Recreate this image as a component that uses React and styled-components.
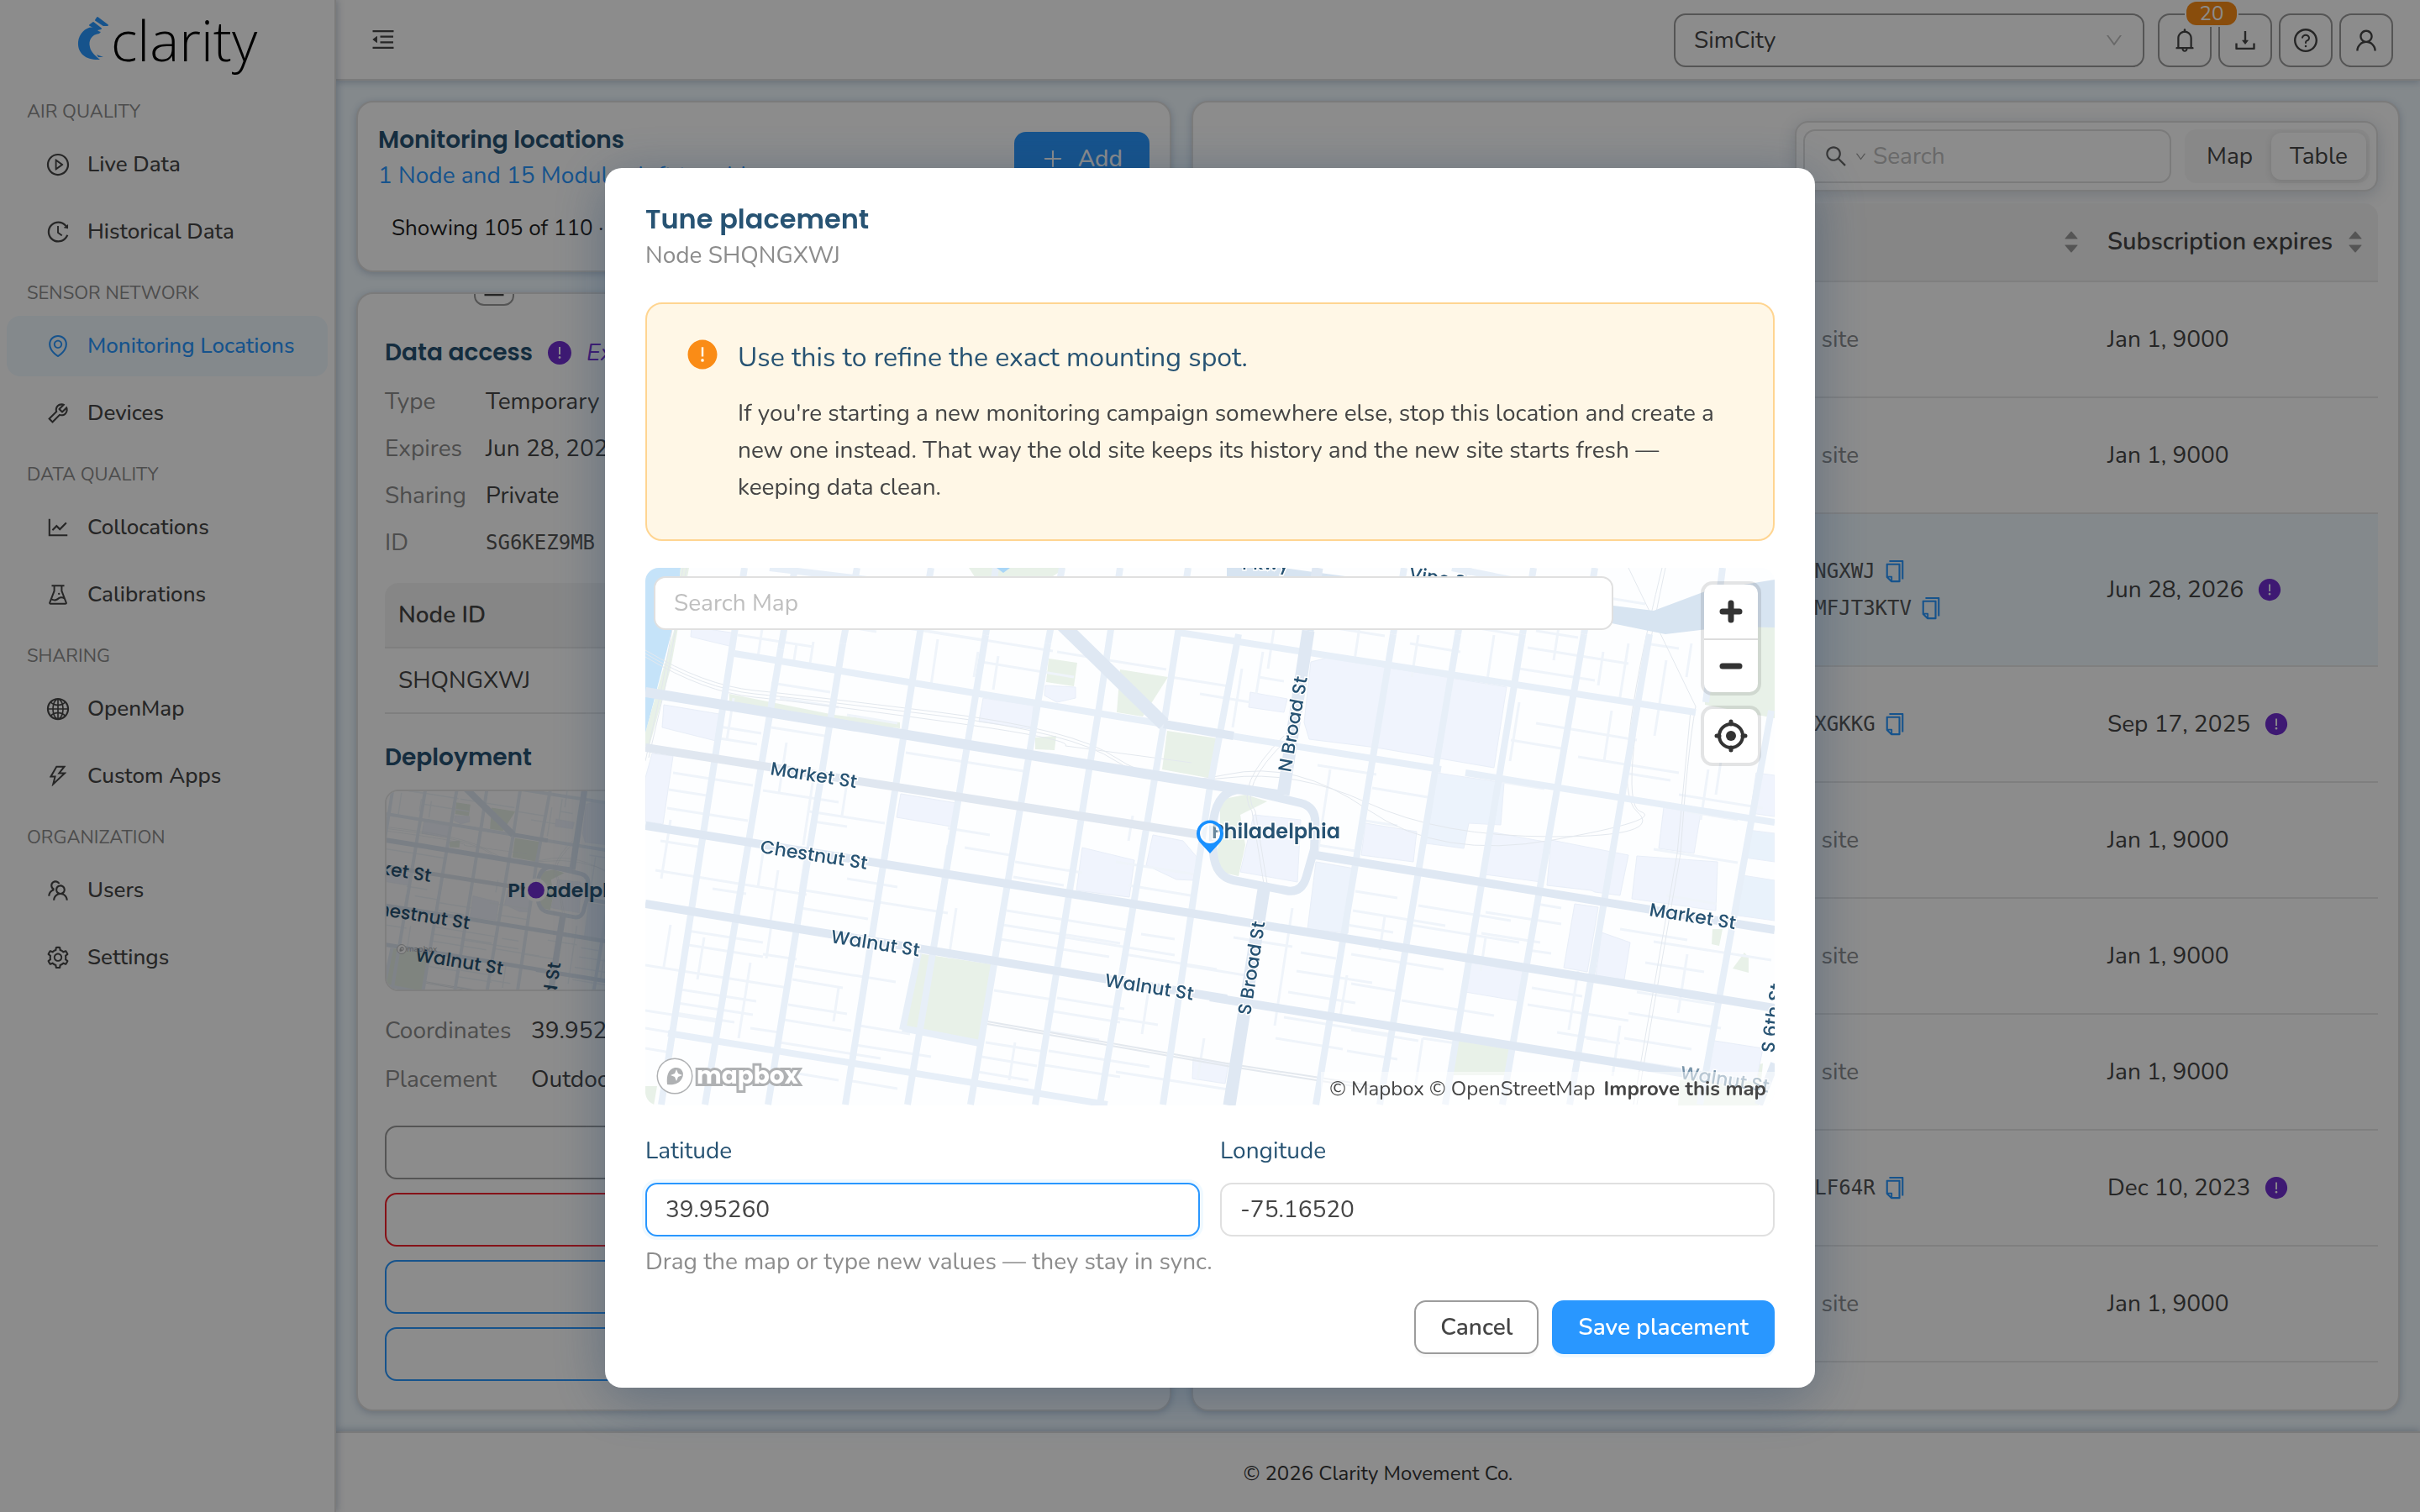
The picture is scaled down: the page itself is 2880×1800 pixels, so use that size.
import React from 'react';
import styled, { createGlobalStyle } from 'styled-components';
import {
    AiFillCaretDown,
    AiFillCaretUp,
    AiFillExclamationCircle,
    AiOutlineBell,
    AiOutlineCopy,
    AiOutlineDown,
    AiOutlineDownload,
    AiOutlineEnvironment,
    AiOutlineExperiment,
    AiOutlineGlobal,
    AiOutlineHistory,
    AiOutlineLineChart,
    AiOutlineMenuFold,
    AiOutlineMinus,
    AiOutlinePlayCircle,
    AiOutlinePlus,
    AiOutlineQuestionCircle,
    AiOutlineSearch,
    AiOutlineSetting,
    AiOutlineTeam,
    AiOutlineThunderbolt,
    AiOutlineTool,
    AiOutlineUser
} from 'react-icons/ai';

const menu = [
    { title: 'AIR QUALITY', items: [['Live Data', AiOutlinePlayCircle], ['Historical Data', AiOutlineHistory]] },
    { title: 'SENSOR NETWORK', items: [['Monitoring Locations', AiOutlineEnvironment], ['Devices', AiOutlineTool]] },
    { title: 'DATA QUALITY', items: [['Collocations', AiOutlineLineChart], ['Calibrations', AiOutlineExperiment]] },
    { title: 'SHARING', items: [['OpenMap', AiOutlineGlobal], ['Custom Apps', AiOutlineThunderbolt]] },
    { title: 'ORGANIZATION', items: [['Users', AiOutlineTeam], ['Settings', AiOutlineSetting]] }
];

const rows = [
    { expires: 'Jan 1, 9000' },
    { expires: 'Jan 1, 9000' },
    { devices: ['SHQNGXWJ', 'AKJMFJT3KTV'], expires: 'Jun 28, 2026', warn: true, active: true },
    { devices: ['SVYXGKKG'], expires: 'Sep 17, 2025', warn: true },
    { expires: 'Jan 1, 9000' },
    { expires: 'Jan 1, 9000' },
    { expires: 'Jan 1, 9000' },
    { devices: ['SN8LF64R'], expires: 'Dec 10, 2023', warn: true },
    { expires: 'Jan 1, 9000' }
];

// Short alleys that run parallel to the main streets: x, y, length
const alleys = [
    [110, 80, 90], [165, 58, 110], [250, 62, 150], [335, 75, 150], [150, 137, 70], [160, 155, 70], [240, 175, 60],
    [88, 189, 50], [88, 203, 45], [150, 190, 70], [310, 220, 140], [400, 112, 110], [490, 100, 130], [625, 130, 70],
    [33, 244, 95], [28, 264, 45], [26, 286, 96], [140, 265, 90], [195, 290, 90], [200, 302, 40], [360, 310, 50],
    [380, 333, 60], [440, 350, 80], [438, 368, 60], [18, 325, 45], [12, 360, 180], [80, 382, 40], [190, 384, 170],
    [185, 405, 80], [240, 370, 60], [430, 408, 150], [425, 425, 140], [422, 442, 130], [560, 350, 95], [575, 378, 80],
    [50, 432, 90], [45, 448, 95], [0, 473, 170], [140, 460, 40], [178, 474, 120], [175, 490, 60], [42, 502, 90],
    [38, 518, 90], [0, 527, 90], [170, 520, 70], [165, 538, 80], [36, 530, 70], [255, 545, 60], [160, 565, 120],
    [0, 548, 30], [125, 548, 34], [0, 572, 30], [250, 568, 90], [245, 588, 80], [170, 600, 60], [240, 610, 60],
    [405, 565, 70], [400, 582, 66], [396, 600, 60], [480, 552, 60], [560, 536, 50], [480, 575, 120], [475, 592, 90],
    [560, 600, 140], [415, 503, 70], [490, 512, 80], [485, 528, 80], [500, 440, 130], [590, 436, 40], [570, 460, 110],
    [640, 473, 80], [700, 440, 70], [660, 150, 60], [730, 130, 30], [780, 215, 60], [800, 235, 70], [865, 262, 66],
    [850, 300, 45], [800, 330, 45], [845, 385, 50], [842, 408, 110], [835, 425, 55], [920, 402, 110], [910, 425, 130],
    [1000, 410, 90], [995, 435, 70], [1060, 400, 30], [1050, 455, 28], [780, 458, 42], [775, 480, 90], [840, 460, 110],
    [840, 495, 60], [900, 515, 110], [765, 505, 80], [760, 535, 130], [750, 560, 80], [840, 550, 80], [835, 575, 60],
    [925, 560, 40], [1000, 565, 120], [1055, 500, 60], [1050, 520, 120], [1085, 553, 60], [1120, 560, 40],
    [1150, 400, 70], [1160, 430, 80], [1200, 445, 140], [1190, 470, 70], [1180, 505, 100], [1170, 530, 110],
    [1165, 560, 80], [1160, 585, 120], [1215, 390, 60], [1060, 185, 60], [1030, 205, 60], [1020, 255, 50],
    [1120, 195, 60], [1110, 225, 120], [1170, 245, 50], [1230, 270, 100], [1240, 290, 60], [1200, 335, 100],
    [1050, 95, 120], [1040, 120, 90], [1060, 75, 50], [1110, 30, 80], [1190, 90, 40], [900, 60, 60], [910, 90, 60],
    [980, 70, 60], [850, 50, 40], [810, 70, 70], [1000, 20, 90], [560, 60, 60]
];

// Side passages that run parallel to the numbered avenues: x, y, length
const passages = [
    [140, 66, 40], [180, 90, 26], [200, 88, 26], [348, 85, 55], [420, 105, 40], [396, 100, 30], [105, 155, 50],
    [168, 208, 60], [200, 250, 80], [240, 255, 40], [30, 300, 70], [158, 360, 60], [140, 340, 40], [190, 345, 40],
    [360, 330, 40], [370, 405, 60], [70, 440, 50], [30, 425, 50], [150, 425, 40], [125, 470, 90], [230, 500, 40],
    [440, 565, 45], [600, 495, 60], [665, 560, 50], [580, 295, 30], [815, 240, 100], [770, 405, 140], [880, 415, 40],
    [835, 485, 50], [1040, 160, 70], [1090, 50, 60], [1150, 170, 60], [1140, 100, 40], [1170, 90, 70], [1010, 80, 60],
    [920, 80, 50], [850, 70, 40], [750, 60, 60], [710, 120, 70], [735, 100, 50], [1215, 110, 90], [1245, 90, 40],
    [1265, 240, 60], [1280, 230, 40], [1240, 460, 70], [1160, 545, 60], [1000, 440, 40], [925, 560, 60], [1110, 480, 70]
];

const Streets = () => (
    <>
        <rect x="-20" y="-20" width="1400" height="700" fill="#fdfeff" />
        <path d="M0 0H42L38 50L0 198Z" fill="#c5e3f9" />
        <path d="M42 0H52L30 120L4 215L0 212V196L34 75Z" fill="#e8f1e8" />
        <g fill="#e8f1e8">
            <path d="M385 0H500L470 20H398Z" />
            <path d="M480 108L514 113L510 141L477 136Z" />
            <path d="M565 121L622 130L592 177L561 172Z" />
            <path d="M621 194L681 203L675 251L615 240Z" />
            <path d="M100 150L225 175L303 184V191L215 183L100 160Z" />
            <path d="M464 202L489 200L487 217L464 216Z" />
            <path d="M325 459L412 472L398 563L307 550Z" />
            <path d="M684 276L714 270L740 278L708 294L714 330L706 367L676 360L684 320Z" />
            <path d="M964 559L1031 572L1024 604H959Z" />
            <path d="M1344 68V179L1261 163V128L1310 60Z" />
            <path d="M1231 610L1330 590L1325 640H1229Z" />
            <path d="M1308 458L1313 464V482L1294 477Z" />
            <path d="M1270 430L1282 430L1278 450L1269 448Z" />
            <path d="M0 617H14L10 640H0Z" />
        </g>
        <g fill="#f0f4fd" stroke="#e8eef8" strokeWidth="1">
            <path d="M55 70L108 78L104 94L54 82Z" />
            <path d="M22 163L88 174L84 206L20 190Z" />
            <path d="M8 221L33 224L21 305L0 302V250Z" />
            <path d="M402 155L462 164L459 192L397 183Z" />
            <path d="M304 269L370 280L364 308L299 297Z" />
            <path d="M476 140L512 142V155L490 160L475 152Z" />
            <path d="M520 333L582 348L576 392L513 384Z" />
            <path d="M604 318L640 325L657 345L652 372L632 371L596 354Z" />
            <path d="M792 112L812 107L1025 142L1010 238L870 214L790 204L784 184Z" />
            <path d="M720 148L764 156L760 172L718 166Z" />
            <path d="M942 244L1022 256L1018 306L980 304L974 334L929 328Z" fill="#ecf3fc" />
            <path d="M857 304L918 314L914 350L852 342Z" />
            <path d="M1004 314L1070 326L1066 374L999 365Z" />
            <path d="M1078 324L1170 342L1160 390L1130 386L1126 384L1073 378Z" />
            <path d="M1180 343L1276 350L1274 408L1174 394Z" />
            <path d="M798 350L844 358L836 435L788 430Z" fill="#edf3fc" />
            <path d="M1106 400L1134 404L1121 481L1093 476Z" />
            <path d="M1138 434L1172 446L1165 490L1131 486Z" />
            <path d="M982 470L1047 481L1041 516L976 505Z" />
            <path d="M1212 285L1256 292L1248 340L1206 334Z" />
            <path d="M1312 312L1344 316V350L1308 345Z" fill="#e9f2fb" />
            <path d="M1306 366L1344 372V420L1300 414Z" fill="#e9f2fb" />
            <path d="M1322 244L1344 247V296L1315 292Z" />
            <path d="M1266 562L1330 572L1322 612L1262 604Z" />
            <path d="M724 294L780 300L776 374L708 362Z" />
            <path d="M652 584L694 590L690 614L651 608Z" />
        </g>
        <g fill="none" stroke="#eff4fa" strokeWidth="3">
            {alleys.map(([x, y, l]) => <path key={`a${x}-${y}`} d={`M${x} ${y}l${l} ${Math.round(l * 0.16)}`} />)}
            {passages.map(([x, y, l]) => <path key={`p${x}-${y}`} d={`M${x} ${y}l${-Math.round(l * 0.15)} ${l}`} />)}
        </g>
        <g fill="none" stroke="#e3e8ee" strokeWidth="1">
            <path d="M0 98Q70 140 130 146T350 172T560 226T692 250T860 280T1080 320T1180 290T1210 0" />
            <path d="M0 102Q70 144 130 150T350 176T560 230T692 246T860 288T1080 324T1184 290T1214 0" />
            <path d="M0 106Q70 148 130 154T350 182T500 212L650 232" />
            <path d="M45 0L20 140L0 230M49 0L24 140L4 226" />
            <path d="M1170 0L1250 165Q1240 220 1232 340L1180 639M1244 170L1228 340L1176 639" />
            <path d="M760 200Q700 260 722 290L736 376M764 204Q704 262 726 290L740 376" />
            <path d="M407 540L692 590L900 622M407 543L692 593L900 626" strokeWidth="2" />
        </g>
        <g fill="none" stroke="#e7eff8" strokeWidth="8">
            <path d="M118 0L19 639M161 97L71 639M235 90L146 639M328 70L238 639M405 80L312 639M479 90L387 639" />
            <path d="M565 0L541 160L464 639M646 0L617 186L541 639M706 79L672 260L616 639" />
            <path d="M161 97L178 0M235 90L252 0M328 70L340 0M405 80L417 0M479 90L496 0" />
            <path d="M890 79L798 639M967 79L874 639M1044 79L952 639M1117 79L1020 639M1195 79L1100 639M1340 170L1255 639" />
            <path d="M890 79L903 0M967 79L980 0M1044 79L1057 0M1117 79L1130 0M1282 0L1262 160" />
            <path d="M106 102L617 186L700 200M635 77L1250 172M672 196L947 240M976 244L1344 303M148 0L380 28" />
            <path d="M27 554L550 639M306 548L398 566M325 459L306 550M960 0L1060 20" />
        </g>
        <path d="M692 -10Q860 16 1000 28L1152 45L1200 51L1264 27L1344 14V71L1290 70L1214 79L1150 66L1000 52L692 14Z" fill="#d7e4f1" />
        <g fill="none" stroke="#dfe8f3" strokeWidth="10">
            <path d="M0 214L662 318" stroke="#e0e7f0" />
            <path d="M0 307L692 418M672 415L1344 524M0 400L692 513M672 511L1300 612M617 186L700 200" />
            <path d="M798 342L1344 431" />
            <path d="M676 320V300Q682 262 712 264L780 280Q800 285 797 310L796 335L786 370Q780 388 762 384L700 372Q672 366 676 320" />
            <path d="M1344 590L1325 639" />
        </g>
        <g fill="none" stroke="#dfe8f3">
            <path d="M0 148L692 261L759 271" strokeWidth="12" />
            <path d="M480 52L617 186" strokeWidth="16" />
            <path d="M789 75L759 270M736 383L695 640" strokeWidth="15" />
            <path d="M800 0L789 75" strokeWidth="13" />
        </g>
        <path d="M418 0H434L426 6Z" fill="#a9d6f7" />
    </>
);

const BrandMark = () => (
    <svg width="40" height="56" viewBox="0 0 40 56" aria-hidden="true">
        <path d="M26 21C17 22 13 29 15 37C16 43 22 48 27 52C12 53 0 46 1 31C2 20 12 11 21 14C24 15 23 18 28 19Z" fill="#2997ff" />
        <path d="M19 8L28 15L24 16L15 11ZM24 2L36 11L31 11L22 5Z" fill="#2997ff" stroke="#2997ff" strokeWidth="2" strokeLinejoin="round" />
        <path d="M23 46L31 49L25 49Z" fill="#2997ff" />
    </svg>
);

const LocateIcon = () => (
    <svg width="40" height="40" viewBox="0 0 40 40" aria-hidden="true">
        <circle cx="20" cy="20" r="14" fill="none" stroke="#333" strokeWidth="4" />
        <circle cx="20" cy="20" r="6" fill="#333" />
        <path d="M20 3V6M20 34V37M3 20H6M34 20H37" stroke="#333" strokeWidth="5" strokeLinecap="round" />
    </svg>
);

const ZoomGlyph = ({ d }) => (
    <svg width="32" height="32" viewBox="0 0 32 32" aria-hidden="true">
        <path d={d} stroke="#333" strokeWidth="7" strokeLinecap="round" />
    </svg>
);

const MapboxMark = ({ size }) => (
    <svg width={size} height={size} viewBox="0 0 44 44" aria-hidden="true">
        <circle cx="22" cy="22" r="20" fill="#fff" stroke="#afb1b3" strokeWidth="3" />
        <path d="M13 32C12 22 14 14 22 12C30 11 34 18 31 24C28 31 21 33 13 32Z" fill="#afb1b3" />
        <path d="M24 14L26 19L31 21L26 23L24 28L22 23L17 21L22 19Z" fill="#fff" />
    </svg>
);

const Pin = () => (
    <svg width="36" height="44" viewBox="0 0 36 44" aria-hidden="true">
        <circle cx="18" cy="18" r="11" fill="#fff" fillOpacity=".3" stroke="#fff" strokeOpacity=".7" strokeWidth="3" />
        <path fillRule="evenodd" d="M18 42L7 30A16 16 0 1 1 29 30ZM18 6A12 12 0 1 0 18 30A12 12 0 1 0 18 6Z" fill="#1890ff" />
    </svg>
);

const Sidebar = () => (
    <Sider>
        <Brand href="#home"><BrandMark />clarity</Brand>
        <nav>
            {menu.map(group => (
                <MenuGroup key={group.title}>
                    <GroupTitle>{group.title}</GroupTitle>
                    {group.items.map(([label, Icon]) => (
                        <MenuItem key={label} href="#menu" $active={label === 'Monitoring Locations'}>
                            <Icon size={30} />{label}
                        </MenuItem>
                    ))}
                </MenuGroup>
            ))}
        </nav>
    </Sider>
);

const TopBar = () => (
    <Header>
        <IconToggle aria-label="Collapse menu"><AiOutlineMenuFold size={32} /></IconToggle>
        <HeaderTools>
            <SelectBox>
                <OrgSelect aria-label="Organization" defaultValue="SimCity">
                    <option>SimCity</option>
                </OrgSelect>
                <AiOutlineDown size={24} />
            </SelectBox>
            <ToolButtons>
                <SquareButton aria-label="Notifications"><AiOutlineBell size={32} /><Badge>20</Badge></SquareButton>
                <SquareButton aria-label="Downloads"><AiOutlineDownload size={32} /></SquareButton>
                <SquareButton aria-label="Help"><AiOutlineQuestionCircle size={32} /></SquareButton>
                <SquareButton aria-label="Account"><AiOutlineUser size={32} /></SquareButton>
            </ToolButtons>
        </HeaderTools>
    </Header>
);

const SummaryCard = () => (
    <Card>
        <Summary>
            <SummaryTop>
                <div>
                    <CardTitle>Monitoring locations</CardTitle>
                    <SummaryLink href="#modules">1 Node and 15 Modules left to add</SummaryLink>
                </div>
                <AddButton><AiOutlinePlus size={28} />Add</AddButton>
            </SummaryTop>
            <Showing>Showing 105 of 110 ·</Showing>
        </Summary>
    </Card>
);

const DetailCard = () => (
    <Card $grow>
        <Detail>
            <ClippedRow><SquareButton aria-label="More"><AiOutlineMinus size={32} /></SquareButton></ClippedRow>
            <SectionTitle>
                Data access
                <AiFillExclamationCircle size={32} color="#722ed1" />
                <ExpiresNote>Expires soon</ExpiresNote>
            </SectionTitle>
            <Facts $label={120} $row={56}>
                <dt>Type</dt><dd>Temporary</dd>
                <dt>Expires</dt><dd>Jun 28, 2026</dd>
                <dt>Sharing</dt><dd>Private</dd>
                <dt>ID</dt><dd><Code>SG6KEZ9MB<AiOutlineCopy size={30} color="#2997ff" /></Code></dd>
            </Facts>
            <NodeTable>
                <thead><tr><th>Node ID</th></tr></thead>
                <tbody><tr><td>SHQNGXWJ</td></tr></tbody>
            </NodeTable>
            <DeploymentTitle>Deployment</DeploymentTitle>
            <MiniMap>
                <MapCanvas viewBox="312 80 720 480" preserveAspectRatio="xMidYMid slice" aria-hidden="true">
                    <Streets />
                </MapCanvas>
                <MiniText viewBox="0 0 360 240">
                    <text x="-50" y="93" transform="rotate(9 -50 93)">Market St</text>
                    <text x="-28" y="146" transform="rotate(9 -28 146)">Chestnut St</text>
                    <text x="34" y="204" transform="rotate(9 34 204)">Walnut St</text>
                    <text x="194" y="318" transform="rotate(-82 194 318)">S Broad St</text>
                    <CityName x="146" y="127">Philadelphia</CityName>
                    <circle cx="180" cy="119" r="12" fill="#722ed1" stroke="#fff" strokeWidth="4" />
                </MiniText>
                <MiniLogo><MapboxMark size={12} />mapbox</MiniLogo>
            </MiniMap>
            <Facts $label={174} $row={58}>
                <dt>Coordinates</dt><dd>39.95260, -75.16520</dd>
                <dt>Placement</dt><dd>Outdoor</dd>
            </Facts>
            <Actions>
                <WideButton $color="#9c9c9c" aria-label="Edit location" />
                <WideButton $color="#f5222d" aria-label="Stop location" />
                <WideButton $color="#2997ff" aria-label="Open live data" />
                <WideButton $color="#2997ff" aria-label="Open historical data" />
            </Actions>
        </Detail>
    </Card>
);

const Sorter = () => (
    <SorterBox><AiFillCaretUp size={22} /><AiFillCaretDown size={22} /></SorterBox>
);

const LocationsCard = () => (
    <Card>
        <TableArea>
            <Toolbar>
                <SearchBox>
                    <AiOutlineSearch size={30} color="#666" />
                    <AiOutlineDown size={15} />
                    <SearchInput placeholder="Search" aria-label="Search" />
                </SearchBox>
                <Segmented>
                    <label><input type="radio" name="view" />Map</label>
                    <label><input type="radio" name="view" defaultChecked />Table</label>
                </Segmented>
            </Toolbar>
            <Table>
                <thead>
                    <tr>
                        <th />
                        <th><HeadCell>&nbsp;<Sorter /></HeadCell></th>
                        <th><HeadCell>Subscription expires<Sorter /></HeadCell></th>
                    </tr>
                </thead>
                <tbody>
                    {rows.map((row, i) => (
                        <Row key={i} $active={row.active}>
                            <td />
                            <td>
                                {row.devices
                                    ? row.devices.map(id => (
                                        <Code key={id}>{id}<AiOutlineCopy size={30} color="#2997ff" /></Code>
                                    ))
                                    : <Muted>No site</Muted>}
                            </td>
                            <td>
                                <DateCell>
                                    {row.expires}
                                    {row.warn && <AiFillExclamationCircle size={30} color="#722ed1" />}
                                </DateCell>
                            </td>
                        </Row>
                    ))}
                </tbody>
            </Table>
        </TableArea>
    </Card>
);

const PlacementMap = () => (
    <MapBox>
        <MapCanvas viewBox="0 0 1344 640" preserveAspectRatio="xMidYMid slice">
            <Streets />
            <StreetNames>
                <text x="148" y="246" transform="rotate(9 148 246)">Market St</text>
                <text x="136" y="339" transform="rotate(9 136 339)">Chestnut St</text>
                <text x="220" y="446" transform="rotate(9 220 446)">Walnut St</text>
                <text x="546" y="498" transform="rotate(9 546 498)">Walnut St</text>
                <text x="1194" y="414" transform="rotate(9 1194 414)">Market St</text>
                <text x="1231" y="608" transform="rotate(9 1231 608)" opacity=".6">Walnut St</text>
                <text x="768" y="244" transform="rotate(-80 768 244)">N Broad St</text>
                <text x="720" y="533" transform="rotate(-81 720 533)">S Broad St</text>
                <text x="1343" y="578" transform="rotate(-82 1343 578)">S 6th St</text>
                <text x="710" y="2">Pkwy</text>
                <text x="908" y="14" transform="rotate(9 908 14)">Vine St</text>
                <CityName x="674" y="322">Philadelphia</CityName>
            </StreetNames>
        </MapCanvas>
        <PinSpot><Pin /></PinSpot>
        <MapSearch placeholder="Search Map" aria-label="Search Map" />
        <MapControls>
            <ControlGroup>
                <button aria-label="Zoom in"><ZoomGlyph d="M16 6V26M6 16H26" /></button>
                <button aria-label="Zoom out"><ZoomGlyph d="M6 16H26" /></button>
            </ControlGroup>
            <ControlGroup>
                <button aria-label="Find my location"><LocateIcon /></button>
            </ControlGroup>
        </MapControls>
        <MapLogo><MapboxMark size={44} />mapbox</MapLogo>
        <Attribution>
            <a href="#mapbox">© Mapbox</a> <a href="#osm">© OpenStreetMap</a> <ImproveLink href="#improve">Improve this map</ImproveLink>
        </Attribution>
    </MapBox>
);

const PlacementDialog = () => (
    <Mask>
        <Dialog role="dialog" aria-modal="true" aria-labelledby="dialog-title">
            <DialogTitle id="dialog-title">Tune placement</DialogTitle>
            <DialogSub>Node SHQNGXWJ</DialogSub>
            <Alert>
                <AiFillExclamationCircle size={40} color="#fa8c16" />
                <div>
                    <AlertTitle>Use this to refine the exact mounting spot.</AlertTitle>
                    <AlertText>
                        If you're starting a new monitoring campaign somewhere else, stop this location and create a
                        new one instead. That way the old site keeps its history and the new site starts fresh —
                        keeping data clean.
                    </AlertText>
                </div>
            </Alert>
            <PlacementMap />
            <Fields>
                <Field>
                    <label htmlFor="lat">Latitude</label>
                    <TextInput id="lat" defaultValue="39.95260" $focused />
                </Field>
                <Field>
                    <label htmlFor="lng">Longitude</label>
                    <TextInput id="lng" defaultValue="-75.16520" />
                </Field>
            </Fields>
            <Hint>Drag the map or type new values — they stay in sync.</Hint>
            <DialogActions>
                <Button>Cancel</Button>
                <Button $primary>Save placement</Button>
            </DialogActions>
        </Dialog>
    </Mask>
);

const App = () => (
    <>
        <GlobalStyle />
        <Shell>
            <Sidebar />
            <Main>
                <TopBar />
                <Content>
                    <LeftColumn>
                        <SummaryCard />
                        <DetailCard />
                    </LeftColumn>
                    <LocationsCard />
                </Content>
                <Footer>© 2026 Clarity Movement Co.</Footer>
            </Main>
        </Shell>
        <PlacementDialog />
    </>
);

const GlobalStyle = createGlobalStyle`
    * { box-sizing: border-box; }
    body {
        margin: 0;
        background: #f0f9ff;
        color: #454545;
        font: 28px/44px Nunito, Lato, sans-serif;
    }
    button, input, select { font: inherit; color: inherit; }
    a { color: inherit; text-decoration: none; }
    h1, h2, h3, p, dl, dd { margin: 0; }
    svg { flex: none; }
`;

const Shell = styled.div`
    display: flex;
    min-height: 100vh;
`;

const Sider = styled.aside`
    flex: 0 0 400px;
    background: #fff;
    border-right: 2px solid #e0e0e0;
    box-shadow: 2px 0 8px rgba(31, 64, 103, .25);
    z-index: 1;
`;

const Brand = styled.a`
    display: flex;
    align-items: center;
    height: 100px;
    padding: 0 0 6px 92px;
    color: #000;
    font: 300 66px/84px 'Open Sans', sans-serif;
`;

const MenuGroup = styled.div`
    display: flex;
    flex-direction: column;
`;

const GroupTitle = styled.div`
    padding: 13px 0 0 32px;
    height: 56px;
    font-size: 22px;
    line-height: 40px;
    color: #8c8c8c;
`;

const MenuItem = styled.a`
    display: flex;
    align-items: center;
    gap: 20px;
    height: 72px;
    margin: 4px 8px;
    padding-left: 46px;
    border-radius: 16px;
    font-size: 26px;
    font-weight: 500;
    color: ${({ $active }) => $active ? '#2997ff' : '#454545'};
    background: ${({ $active }) => $active ? '#f0f9ff' : 'none'};
`;

const Main = styled.div`
    flex: 1;
    min-width: 0;
    display: flex;
    flex-direction: column;
`;

const Header = styled.header`
    display: flex;
    align-items: center;
    justify-content: space-between;
    height: 96px;
    padding: 0 32px 0 40px;
    background: #fff;
    border-bottom: 2px solid #e0e0e0;
    box-shadow: 0 2px 8px rgba(31, 64, 103, .25);
`;

const IconToggle = styled.button`
    display: flex;
    padding: 0;
    border: 0;
    background: none;
`;

const HeaderTools = styled.div`
    display: flex;
    gap: 16px;
    margin-top: 2px;
`;

const SelectBox = styled.div`
    display: flex;
    align-items: center;
    width: 560px;
    height: 64px;
    padding: 0 22px 0 0;
    border: 2px solid #9c9c9c;
    border-radius: 14px;
    color: #bfbfbf;
`;

const OrgSelect = styled.select`
    flex: 1;
    height: 60px;
    padding: 0 0 0 22px;
    appearance: none;
    border: 0;
    background: none;
    color: #454545;
`;

const ToolButtons = styled.div`
    display: flex;
    gap: 8px;
`;

const SquareButton = styled.button`
    position: relative;
    display: flex;
    align-items: center;
    justify-content: center;
    flex: 0 0 64px;
    height: 64px;
    padding: 0;
    border: 2px solid #9c9c9c;
    border-radius: 14px;
    background: #fff;
`;

const Badge = styled.span`
    position: absolute;
    top: -16px;
    right: -32px;
    z-index: 1;
    width: 60px;
    height: 28px;
    border-radius: 12px;
    background: #fa8c16;
    box-shadow: 0 0 0 2px #fff;
    color: #fff;
    font-size: 24px;
    line-height: 28px;
`;

const Content = styled.main`
    flex: 1;
    display: grid;
    grid-template-columns: 970fr 1438fr;
    gap: 24px;
    padding: 24px;
`;

const LeftColumn = styled.div`
    display: flex;
    flex-direction: column;
    gap: 24px;
    min-width: 0;
`;

const Card = styled.section`
    min-width: 0;
    flex: ${({ $grow }) => $grow ? 1 : 'none'};
    overflow: hidden;
    background: #fff;
    border: 2px solid #e0e0e0;
    border-radius: 20px;
    box-shadow: 0 2px 8px rgba(31, 64, 103, .25);
`;

const Summary = styled.div`
    padding: 24px 24px 28px;
`;

const SummaryTop = styled.div`
    display: flex;
    align-items: flex-start;
    justify-content: space-between;
    height: 84px;
    line-height: 42px;
`;

const CardTitle = styled.h2`
    font: 600 28px/42px Poppins, Inter, sans-serif;
    color: #275373;
`;

const SummaryLink = styled.a`
    display: block;
    color: #2997ff;
`;

const AddButton = styled.button`
    display: flex;
    align-items: center;
    gap: 16px;
    height: 64px;
    margin-top: 11px;
    padding: 0 32px;
    border: 0;
    border-radius: 14px;
    background: #2997ff;
    color: #fff;
    font-weight: 500;
`;

const Showing = styled.p`
    margin: 20px 0 0 16px;
    font-size: 26px;
    color: #1f1f1f;
`;

const Detail = styled.div`
    padding: 0 32px 32px;
`;

const ClippedRow = styled.div`
    display: flex;
    align-items: flex-end;
    width: 48px;
    height: 14px;
    margin: 0 0 34px 106px;
    overflow: hidden;

    ${SquareButton} {
        flex-basis: 48px;
        height: 26px;
        border-radius: 12px;
    }
`;

const SectionTitle = styled.h3`
    display: flex;
    align-items: center;
    gap: 16px;
    margin-bottom: 8px;
    font: 600 28px/44px Poppins, Inter, sans-serif;
    color: #275373;
`;

const DeploymentTitle = styled(SectionTitle)`
    margin: 30px 0 16px;
`;

const ExpiresNote = styled.em`
    font: italic 400 28px/44px Nunito, Lato, sans-serif;
    color: #722ed1;
`;

const Facts = styled.dl`
    display: grid;
    grid-template-columns: ${({ $label }) => $label}px 1fr;
    grid-auto-rows: ${({ $row }) => $row}px;
    align-items: center;

    dt { color: #8c8c8c; }
`;

const Code = styled.span`
    display: flex;
    align-items: center;
    gap: 8px;
    font: 24px/44px 'DejaVu Sans Mono', monospace;
    color: #555;
`;

const NodeTable = styled.table`
    width: 100%;
    margin-top: 20px;
    border-spacing: 0;
    text-align: left;

    th, td {
        height: 78px;
        padding: 0 16px;
        border-bottom: 2px solid #e8e8e8;
    }

    th {
        background: #f5f5f5;
        border-radius: 16px 16px 0 0;
        font-weight: 600;
    }
`;

const MiniMap = styled.div`
    position: relative;
    width: 360px;
    height: 240px;
    margin-bottom: 18px;
    overflow: hidden;
    border: 2px solid #e8e8e8;
    border-radius: 16px;
`;

const MapCanvas = styled.svg`
    display: block;
    width: 100%;
    height: 100%;
`;

const StreetNames = styled.g`
    font: 500 22px Poppins, Inter, sans-serif;
    fill: #275373;
    stroke: #fff;
    stroke-width: 3px;
    paint-order: stroke;
`;

const CityName = styled.text`
    font-size: 24px;
    font-weight: 600;
`;

const MiniText = styled.svg`
    position: absolute;
    inset: 0;
    font: 500 22px Poppins, Inter, sans-serif;
    fill: #275373;
`;

const MiniLogo = styled.div`
    position: absolute;
    left: 12px;
    bottom: 42px;
    display: flex;
    align-items: center;
    font-size: 10px;
    line-height: 12px;
    color: #afb1b3;
`;

const Actions = styled.div`
    display: grid;
    gap: 16px;
    margin-top: 26px;
`;

const WideButton = styled.button`
    height: 64px;
    border: 2px solid ${({ $color }) => $color};
    border-radius: 14px;
    background: #fff;
`;

const TableArea = styled.div`
    padding: 22px 24px;
`;

const Toolbar = styled.div`
    display: flex;
    gap: 16px;
    width: 694px;
    margin: 0 0 14px auto;
    padding: 8px;
    border: 2px solid #e0e0e0;
    border-radius: 16px;
    background: #fff;
    box-shadow: 0 4px 20px rgba(31, 64, 103, .2);
`;

const SearchBox = styled.div`
    display: flex;
    align-items: center;
    gap: 7px;
    flex: 1;
    min-width: 0;
    height: 64px;
    padding: 0 22px;
    border: 2px solid #e0e0e0;
    border-radius: 14px;
    color: #9c9c9c;
`;

const SearchInput = styled.input`
    flex: 1;
    min-width: 0;
    padding: 0;
    border: 0;
    outline: 0;
    background: none;

    &::placeholder { color: #bfbfbf; }
`;

const Segmented = styled.div`
    display: flex;
    padding: 4px;
    border-radius: 14px;
    background: #f7f7f7;

    label {
        padding: 6px 22px;
        border-radius: 12px;
    }

    label:has(:checked) {
        background: #fff;
        box-shadow: 0 2px 8px rgba(0, 0, 0, .12);
    }

    input {
        position: absolute;
        opacity: 0;
    }
`;

const Table = styled.table`
    width: 100%;
    table-layout: fixed;
    border-spacing: 0;
    text-align: left;

    th, td {
        padding: 0 16px;
        border-bottom: 2px solid #e8e8e8;
    }

    th {
        height: 94px;
        background: #f5f5f5;
        font-size: 29px;
        font-weight: 600;
    }

    th:nth-child(2) { width: 392px; }
    th:nth-child(3) { width: 338px; border-top-right-radius: 16px; }
`;

const HeadCell = styled.div`
    display: flex;
    align-items: center;
    justify-content: space-between;
    white-space: nowrap;
`;

const SorterBox = styled.span`
    display: flex;
    flex-direction: column;
    color: #9c9c9c;

    svg + svg { margin-top: -6px; }
`;

const Row = styled.tr`
    background: ${({ $active }) => $active ? '#f0f9ff' : 'none'};

    td { height: ${({ $active }) => $active ? 182 : 138}px; }
`;

const Muted = styled.span`
    padding-left: 8px;
    color: #8c8c8c;
`;

const DateCell = styled.div`
    display: flex;
    align-items: center;
    gap: 16px;
`;

const Footer = styled.footer`
    height: 96px;
    background: #fff;
    border-top: 2px solid #e0e0e0;
    box-shadow: 0 -2px 8px rgba(31, 64, 103, .25);
    text-align: center;
    font-size: 24px;
    line-height: 96px;
    color: #333;
`;

const Mask = styled.div`
    position: fixed;
    inset: 0;
    z-index: 10;
    display: flex;
    align-items: flex-start;
    justify-content: center;
    padding-top: 200px;
    overflow: auto;
    background: rgba(0, 0, 0, .45);
`;

const Dialog = styled.div`
    width: 50%;
    min-width: 960px;
    padding: 40px 48px;
    border-radius: 20px;
    background: #fff;
    box-shadow: 0 12px 64px rgba(31, 64, 103, .4);
`;

const DialogTitle = styled.h1`
    font: 600 32px/42px Poppins, Inter, sans-serif;
    color: #275373;
`;

const DialogSub = styled.p`
    color: #8c8c8c;
`;

const Alert = styled.div`
    display: flex;
    gap: 22px;
    margin: 34px 0 32px;
    padding: 40px 46px;
    border: 2px solid #ffd591;
    border-radius: 20px;
    background: #fff7e6;
`;

const AlertTitle = styled.h2`
    margin-bottom: 20px;
    font-size: 32px;
    font-weight: 400;
    line-height: 48px;
    color: #275373;
`;

const AlertText = styled.p`
    color: #454545;
`;

const MapBox = styled.div`
    position: relative;
    height: 640px;
    overflow: hidden;
    border-radius: 16px;
`;

const PinSpot = styled.span`
    position: absolute;
    top: 50%;
    left: 50%;
    line-height: 0;
    transform: translate(-50%, -50%);
`;

const MapSearch = styled.input`
    position: absolute;
    top: 10px;
    left: 10px;
    width: 85%;
    height: 64px;
    padding: 0 22px;
    border: 2px solid #e0e0e0;
    border-radius: 14px;
    background: #fff;
    outline: 0;

    &::placeholder { color: #bfbfbf; }
`;

const MapControls = styled.div`
    position: absolute;
    top: 20px;
    right: 20px;
    display: grid;
    gap: 20px;
`;

const ControlGroup = styled.div`
    overflow: hidden;
    border-radius: 10px;
    background: #fff;
    box-shadow: 0 0 0 4px rgba(0, 0, 0, .1);

    button {
        display: flex;
        align-items: center;
        justify-content: center;
        width: 64px;
        height: 64px;
        padding: 0;
        border: 0;
        background: none;
    }

    button + button {
        border-top: 2px solid #ddd;
    }
`;

const MapLogo = styled.div`
    position: absolute;
    left: 13px;
    bottom: 13px;
    display: flex;
    align-items: center;
    gap: 4px;
    font: 700 28px/44px Poppins, Inter, sans-serif;
    color: #fff;
    -webkit-text-stroke: 6px #afb1b3;
    paint-order: stroke;
`;

const Attribution = styled.div`
    position: absolute;
    right: 0;
    bottom: 0;
    padding: 0 10px;
    background: rgba(255, 255, 255, .5);
    font-size: 24px;
    line-height: 40px;
`;

const ImproveLink = styled.a`
    margin-left: 4px;
    font-weight: 700;
`;

const Fields = styled.div`
    display: grid;
    grid-template-columns: 1fr 1fr;
    gap: 24px;
    margin-top: 32px;
`;

const Field = styled.div`
    display: grid;
    gap: 16px;
    color: #275373;
`;

const TextInput = styled.input`
    width: 100%;
    height: 64px;
    padding: 0 22px;
    border: 2px solid ${({ $focused }) => $focused ? '#2997ff' : '#e0e0e0'};
    border-radius: 14px;
    outline: 0;
    color: #454545;
    box-shadow: ${({ $focused }) => $focused ? '0 0 0 4px #f0f9ff' : 'none'};
`;

const Hint = styled.p`
    margin: 8px 0 24px;
    color: #8c8c8c;
`;

const DialogActions = styled.div`
    display: flex;
    justify-content: flex-end;
    gap: 16px;
`;

const Button = styled.button`
    height: 64px;
    padding: 0 29px;
    border: 2px solid ${({ $primary }) => $primary ? '#2997ff' : '#9c9c9c'};
    border-radius: 14px;
    background: ${({ $primary }) => $primary ? '#2997ff' : '#fff'};
    color: ${({ $primary }) => $primary ? '#fff' : '#454545'};
    font-weight: 600;
    box-shadow: 0 4px 0 ${({ $primary }) => $primary ? '#f0f9ff' : '#fafafa'};
`;

export default App;
